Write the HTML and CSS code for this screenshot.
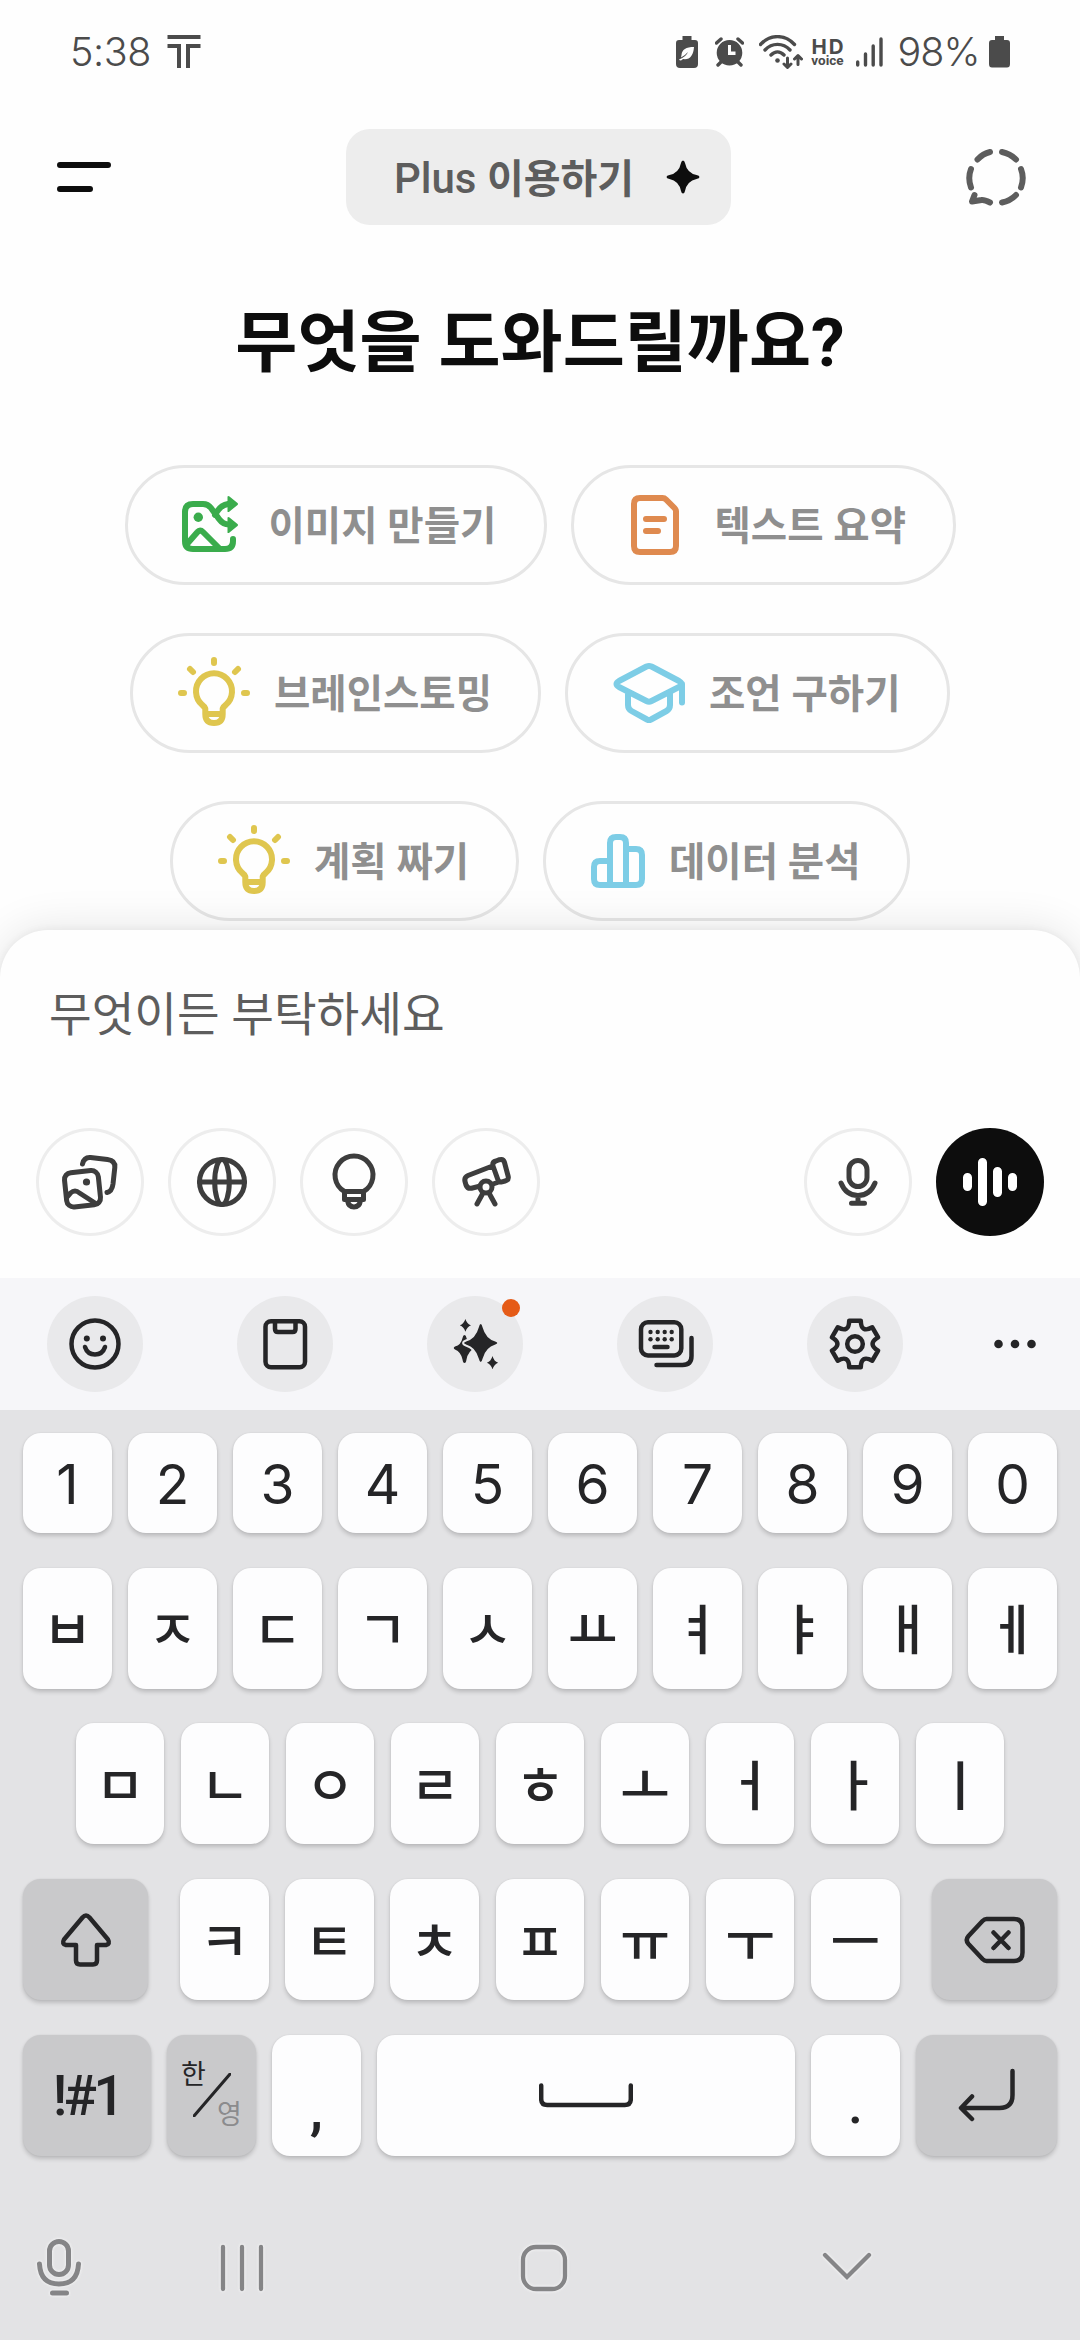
FILE: index.html
```html
<!DOCTYPE html>
<html lang="ko">
<head>
<meta charset="utf-8">
<title>채팅</title>
<link rel="stylesheet" href="styles.css">
</head>
<body>
<div class="screen">
  <div class="status">
    <span class="clock">5:38</span>
    <svg class="carrier" width="34" height="34" viewBox="0 0 34 34"><path d="M.5 0h33v4H.5zM.5 9H14v24h-4V13H.5zM19 9h14.500v4H23v20h-4z"/></svg>
    <svg class="power-save" width="22" height="32" viewBox="0 0 22 32"><path fill-rule="evenodd" d="M6.500 0h9v4H19q3 0 3 3v21q0 4-4 4H4q-4 0-4-4V7q0-3 3-3h3.500zM18 11C10 11 6 13.500 5.500 19L5 21.500q4-2 7-5.500-2 5-9 7.500l1 1q1.500 0 3-1.500 10 1.500 11-12z"/></svg>
    <svg class="alarm" width="29" height="30" viewBox="0 0 29 30"><path fill-rule="evenodd" d="M14.500 3a12.800 12.800 0 1 1 0 25.600A12.800 12.800 0 0 1 14.500 3zM13 8v10h7.500v-3.500H16V8z"/><path class="line" d="M1.500 6 6 2M27.500 6 23 2M6 25l-3 3M23 25l3 3"/></svg>
    <svg class="wifi" width="44" height="34" viewBox="0 0 44 34"><path class="line" d="M1.500 9.500C11-1 26-1 35.500 9.500M6 15c7-7.500 18-7.500 25 0M12 20c4-4 9-4 13 0"/><circle cx="18.500" cy="25.500" r="2.300"/><path class="line arrows" d="M28.500 23v9M25 29l3.500 3.500L32 29M39 29.500v-9M35.500 24l3.500-3.500 3.500 3.500"/></svg>
    <span class="hd"><b>HD</b><i>voice</i></span>
    <svg class="signal" width="27" height="30" viewBox="0 0 27 30"><path class="line" d="M1.700 25v3M9.500 17v11M17.200 9v19M25 2v26"/></svg>
    <span class="percent">98%</span>
    <svg class="battery" width="21" height="32" viewBox="0 0 21 32"><path d="M6 0h9v4h3q3 0 3 3v21q0 3.500-3 3.500H3Q0 31.500 0 28V7q0-3 3-3h3z"/></svg>
  </div>

  <header class="header">
    <svg class="menu" width="54" height="30" viewBox="0 0 54 30"><path d="M3 3h48M3 27h30"/></svg>
    <button class="plus"><span>Plus <b>이용하기</b></span><svg width="34" height="34" viewBox="0 0 34 34"><path d="M17 .5q1.500 0 2 2.500 2 10 11.500 12 3 .700 3 2t-3 2Q21 21 19 31q-.600 2.500-2 2.500T15 31Q13 21 3.500 19q-3-.700-3-2t3-2Q13 13 15 3 15.500.5 17 .5z"/></svg></button>
    <svg class="temp-chat" width="62" height="60" viewBox="0 0 62 60"><path d="M11.500 12.500Q17 6.500 24 5M36 5q8 1.500 14 7.500M55 22q3.500 9 0 18.500M50 48q-6 6-14 7.500M24 55.500Q18 52.500 15.500 53L6 54.500 8.500 48M5 40.500q-3.500-9.500 0-18.500"/></svg>
  </header>

  <main class="intro">
    <h1>무엇을 도와드릴까요?</h1>
    <div class="chips">
      <div class="row">
        <button class="chip w1 green"><svg width="72" height="72" viewBox="0 0 72 72"><path d="M60 50v2q0 8-8 8H20q-8 0-8-8V23q0-8 8-8h10q5 0 8 4l8 11q4 5.500 10 5.500M42 26q5-10 13-11M14 55l10.500-12q2.500-3 5.500 0L46 59"/><circle class="solid" cx="25.300" cy="28.300" r="4.700"/><path class="solid" d="M54.500 7.500q1-1 2 0l8 6.500q1 1 0 2l-8 6.500q-1 1-2 .200zM54.500 28.500q1-1 2 0l8 6.500q1 1 0 2l-8 6.500q-1 1-2 .200z"/></svg><span>이미지 만들기</span></button>
        <button class="chip w2 orange"><svg width="72" height="72" viewBox="0 0 72 72"><path d="M21 9h22.500q2 0 3.500 1.500L55.500 19q1.500 1.500 1.500 3.500V57q0 6-6 6H21q-6 0-6-6V15q0-6 6-6zM27 30h18M27 42h12"/></svg><span>텍스트 요약</span></button>
      </div>
      <div class="row">
        <button class="chip w3 yellow"><svg width="72" height="72" viewBox="0 0 72 72"><path d="M27.300 57v-5.500q-1-2-3-3.500a18 18 0 1 1 23.400 0q-2 1.500-3 3.500V57zM27.300 57q0 9 8.700 9t8.700-9M36 3v3M3 36h3M66 36h3M12 12l3 3M60 12l-3 3"/></svg><span>브레인스토밍</span></button>
        <button class="chip w2 blue"><svg width="72" height="72" viewBox="0 0 72 72"><path d="M33.500 9.500q2.500-1 5 0L66 24q5 3 0 6L38.500 44q-2.500 1.300-5 0L6 30q-5-3 0-6zM69 27v18.500M15 36v12q0 4 3.500 6L34 62.500q2 1 4 0L53.500 54q3.500-2 3.500-6V36"/></svg><span>조언 구하기</span></button>
      </div>
      <div class="row">
        <button class="chip w4 yellow"><svg width="72" height="72" viewBox="0 0 72 72"><path d="M27.300 57v-5.500q-1-2-3-3.500a18 18 0 1 1 23.400 0q-2 1.500-3 3.500V57zM27.300 57q0 9 8.700 9t8.700-9M36 3v3M3 36h3M66 36h3M12 12l3 3M60 12l-3 3"/></svg><span>계획 짜기</span></button>
        <button class="chip w5 blue"><svg width="54" height="72" viewBox="0 0 54 72"><path d="M19 60V18q0-6 6-6h4q6 0 6 6v42M19 36H9q-6 0-6 6v12q0 6 6 6h36q6 0 6-6V30q0-6-6-6H35"/></svg><span>데이터 분석</span></button>
      </div>
    </div>
  </main>

  <section class="composer">
    <div class="prompt">무엇이든 부탁하세요</div>
    <div class="actions">
      <button class="round"><svg width="108" height="108" viewBox="0 0 108 108"><rect x="29.500" y="43.500" width="34" height="34.500" rx="7" transform="rotate(-6 46.500 60.700)"/><path d="M31 69l3.500-4q4.500-4 9 0L59 75M46.500 36q1.500-7 8-6.500l17 2q8 1 7.300 8L77 56q-1 7.500-6 8.500"/><circle class="solid" cx="50.500" cy="54" r="3.600"/></svg></button>
      <button class="round"><svg width="108" height="108" viewBox="0 0 108 108"><circle cx="54" cy="54" r="22.500"/><ellipse cx="54" cy="54" rx="7.300" ry="22.500"/><path d="M31.500 54h45"/></svg></button>
      <button class="round"><svg width="108" height="108" viewBox="0 0 108 108"><path d="M44.500 63.500a19 19 0 1 1 19 0zM44.500 63.500v8h19v-8M47.500 72.500q1 6.500 6.500 6.500t6.500-6.500"/></svg></button>
      <button class="round"><svg width="108" height="108" viewBox="0 0 108 108"><path d="M60.500 38 36 47.500q-4 1.700-3 6l1 3.500q1.500 4 5.500 3.200l7-1.700M61 56l4.500-1.500M64 33l3.500-1.300q4-1 5 2.800l3.600 13.500q1 4-3 5l-3 .800q-3.500.700-4.500-3L61 38q-1-4 3-5zM51 65l-6 11M57 65l6 11"/><circle cx="54" cy="59" r="6"/></svg></button>
      <button class="round mic"><svg width="108" height="108" viewBox="0 0 108 108"><rect x="45" y="32.500" width="18" height="26" rx="9"/><path d="M37 55q5 12.500 17 12.500T71 55M54 68v6M47.500 75.300h13"/></svg></button>
      <button class="round voice"><svg width="108" height="108" viewBox="0 0 108 108"><path d="M31.500 49.500v9M46.500 34.500v39M61.500 43.500v21M76.500 49.500v9"/></svg></button>
    </div>
  </section>

  <section class="keyboard">
    <div class="tools">
      <button class="tool"><svg width="96" height="96" viewBox="0 0 96 96"><circle cx="48" cy="48" r="23.500"/><path d="M38 51q2.500 7.500 10 7.500T58 51"/><circle class="solid" cx="39.800" cy="42.600" r="3"/><circle class="solid" cx="56" cy="42.600" r="3"/></svg></button>
      <button class="tool"><svg width="96" height="96" viewBox="0 0 96 96"><rect x="28.500" y="25.300" width="39.500" height="46" rx="5.500"/><path d="M38 26v7q0 3 3 3h14.500q3 0 3-3v-7"/></svg></button>
      <button class="tool"><svg width="96" height="96" viewBox="0 0 96 96"><path class="solid" d="M37.500 39q1.500 0 2 3 1.500 7 8.500 10-7 3-8.500 11.500-.500 3.500-2 3.500t-2-3.500Q34 56 28 53.500q-2.500-1.500 0-3Q34 49 35.500 42q.500-3 2-3zM38.400 23q1.500 5 5.600 6.300-4 1.500-5.600 6.500-1.500-5-5.600-6.500 4-1.300 5.600-6.300zM65.500 60q1.500 5.500 5.600 6.700-4 1.500-5.600 6.500-1.500-5-5.600-6.500 4-1.200 5.600-6.700z"/><path class="star" d="M53.700 27q1.800 0 2.800 4 3 11 12 13.500 2.800 1 2.800 2.500t-2.800 2.500q-9 2.500-12 13.500-1 4-2.800 4t-2.800-4q-3-11-12-13.500-2.800-1-2.800-2.500t2.800-2.500q9-2.500 12-13.500 1-4 2.800-4z"/></svg><i class="dot"></i></button>
      <button class="tool"><svg width="96" height="96" viewBox="0 0 96 96"><rect x="24" y="26.200" width="40.300" height="33.300" rx="7"/><path d="M74.500 42v18q0 9-9 9H39.500M37.500 51h13"/><g class="solid"><circle cx="33.500" cy="36" r="2.200"/><circle cx="40.700" cy="36" r="2.200"/><circle cx="47.700" cy="36" r="2.200"/><circle cx="54.700" cy="36" r="2.200"/><circle cx="33.500" cy="43.300" r="2.200"/><circle cx="40.700" cy="43.300" r="2.200"/><circle cx="47.700" cy="43.300" r="2.200"/><circle cx="54.700" cy="43.300" r="2.200"/></g></svg></button>
      <button class="tool"><svg width="96" height="96" viewBox="-48 -48 96 96"><path d="M-5.800-23.300H5.800Q6-10.400 17.300-16.700L23.100-6.600Q12 0 23.100 6.600L17.300 16.700Q6 10.400 5.800 23.300H-5.800Q-6 10.400-17.300 16.700L-23.100 6.600Q-12 0-23.100-6.600L-17.300-16.700Q-6-10.400-5.800-23.300z"/><circle r="7.800"/></svg></button>
      <svg class="more" width="44" height="10" viewBox="0 0 44 10"><circle cx="5.500" cy="5" r="4.300"/><circle cx="22" cy="5" r="4.300"/><circle cx="38.500" cy="5" r="4.300"/></svg>
    </div>

    <div class="keys">
      <div class="krow digits"><b>1</b><b>2</b><b>3</b><b>4</b><b>5</b><b>6</b><b>7</b><b>8</b><b>9</b><b>0</b></div>
      <div class="krow jamo"><b>ㅂ</b><b>ㅈ</b><b>ㄷ</b><b>ㄱ</b><b>ㅅ</b><b>ㅛ</b><b>ㅕ</b><b>ㅑ</b><b>ㅐ</b><b>ㅔ</b></div>
      <div class="krow jamo nine"><b>ㅁ</b><b>ㄴ</b><b>ㅇ</b><b>ㄹ</b><b>ㅎ</b><b>ㅗ</b><b>ㅓ</b><b>ㅏ</b><b>ㅣ</b></div>
      <div class="krow shift-row">
        <b class="fn"><svg width="52" height="54" viewBox="0 0 52 54"><path d="M22.500 4.500q3.500-4 7 0L48 26.500q2.500 4.500-2 5.500h-9v15.500q0 4-4 4H20q-4 0-4-4V32H6q-4.500-1-2-5.500z"/></svg></b>
        <div class="letters jamo"><b>ㅋ</b><b>ㅌ</b><b>ㅊ</b><b>ㅍ</b><b>ㅠ</b><b>ㅜ</b><b>ㅡ</b></div>
        <b class="fn"><svg width="62" height="48" viewBox="0 0 62 48"><path d="M22.500 3H50q8.500 0 8.500 8.500v25q0 8.500-8.500 8.500H22.500q-2 0-4-2L4.500 28q-3.500-4 0-8L18.500 5q2-2 4-2zM29.500 16.500l15 15.500M44.500 16.500l-15 15.500"/></svg></b>
      </div>
      <div class="krow bottom-row">
        <b class="fn sym">!#1</b>
        <b class="fn lang"><span class="ko">한</span><svg width="38" height="44" viewBox="0 0 38 44"><path d="M1 43 37 1"/></svg><span class="en">영</span></b>
        <b class="punct comma">,</b>
        <b><svg class="space" width="94" height="25" viewBox="0 0 94 25"><path d="M2.200 2.500V16q0 6 6 6h77.600q6 0 6-6V2.500"/></svg></b>
        <b class="punct">.</b>
        <b class="fn"><svg width="58" height="54" viewBox="0 0 58 54"><path d="M54.500 3v24q0 13-13 13H4M14 28.500 3 40l11 11"/></svg></b>
      </div>
    </div>

    <nav class="nav">
      <svg width="48" height="62" viewBox="0 0 48 62"><rect x="14.500" y="4.500" width="19" height="33" rx="9.500"/><path d="M4.500 27q1 20 19.500 20t19.500-20M17.500 56h14"/></svg>
      <svg width="48" height="62" viewBox="0 0 48 62"><path class="thin" d="M5 10v42M24 10v42M43 10v42"/></svg>
      <svg width="48" height="62" viewBox="0 0 48 62"><rect class="thin" x="3" y="10" width="42" height="42" rx="13"/></svg>
      <svg width="50" height="62" viewBox="0 0 50 62"><path class="thin" d="M3 18l22 22 22-22"/></svg>
    </nav>
  </section>
</div>
</body>
</html>
```
FILE: styles.css
```css
* { box-sizing: border-box; }
body {
  margin: 0;
  background: #fefefe;
  font-family: Roboto, "Noto Sans CJK KR", sans-serif;
  color: #0d0d0d;
}
button { border: 0; padding: 0; background: none; font: inherit; color: inherit; }
svg { display: block; flex: none; }
.screen { width: 1080px; height: 2340px; display: flex; flex-direction: column; overflow: hidden; }

/* status bar */
.status {
  height: 104px; flex: none;
  display: flex; align-items: center;
  padding: 0 70px; color: #4b4b4b;
}
.status svg { fill: #4b4b4b; }
.status .line { fill: none; stroke: #4b4b4b; stroke-width: 3.4; stroke-linecap: round; stroke-linejoin: round; }
.status .arrows { stroke-width: 3; }
.clock, .percent { font-family: Inter, sans-serif; font-size: 39.500px; font-weight: 300; line-height: 40px; letter-spacing: -0.4px; white-space: nowrap; }
.clock { width: 97px; }
.power-save { margin-left: 475px; }
.alarm { margin-left: 17px; }
.wifi { margin-left: 15px; }
.hd { margin-left: 8px; width: 34px; display: flex; flex-direction: column; align-items: center; }
.hd b { font-family: Inter, sans-serif; font-size: 20.500px; line-height: 17px; font-weight: 700; letter-spacing: 2px; margin-right: -2px; }
.hd i { font-size: 13.500px; line-height: 11px; font-style: normal; font-weight: 700; }
.signal { margin-left: 12px; }
.percent { margin-left: 14px; width: 92px; letter-spacing: -0.900px; }

/* header */
.header {
  height: 146px; flex: none;
  display: flex; align-items: center; justify-content: space-between;
  padding: 0 52px 0 57px;
}
.plus {
  width: 385px; height: 96px; border-radius: 24px; background: #ededed;
  display: flex; align-items: center; justify-content: space-between;
  padding: 0 31px 0 48px;
  font-size: 42px; font-weight: 500; color: #5d5d5d; white-space: nowrap;
}
.plus span { padding-bottom: 3px; }
.plus b { font-size: 40px; font-weight: 700; }
.menu { fill: none; stroke: #0d0d0d; stroke-width: 6; stroke-linecap: round; }
.plus svg { fill: #0d0d0d; }
.temp-chat { fill: none; stroke: #5d5d5d; stroke-width: 6; stroke-linecap: round; stroke-linejoin: round; }

/* introduction */
.intro { height: 680px; flex: none; display: flex; flex-direction: column; align-items: center; }
h1 { margin: 48px 0 0; height: 90px; line-height: 90px; font-size: 67.500px; font-weight: 700; white-space: nowrap; }
.chips { margin-top: 77px; display: flex; flex-direction: column; gap: 48px; }
.row { display: flex; justify-content: center; gap: 24px; }
.chip {
  height: 120px; border: 3px solid #e6e6e6; border-radius: 60px;
  display: flex; align-items: center; gap: 24px; padding-left: 45px;
  font-size: 39.500px; font-weight: 700; color: #8f8f8f; white-space: nowrap;
}
.chip span { padding-bottom: 5px; }
.chip svg { fill: none; stroke: currentColor; stroke-width: 6; stroke-linecap: round; stroke-linejoin: round; }
.chip .solid { fill: currentColor; stroke: none; }
.w1 { width: 422px; }
.w2 { width: 385px; }
.w3 { width: 411px; }
.w4 { width: 349px; }
.w5 { width: 367px; }
.green svg { color: #3aac4c; }
.orange svg { color: #df8a4f; }
.yellow svg { color: #dfc64f; }
.blue svg { color: #7dcde6; }

/* composer */
.composer {
  position: relative; height: 348px; flex: none; background: #fefefe;
  border-radius: 48px 48px 0 0;
  box-shadow: 0 0 45px rgba(0, 0, 0, 0.11), 0 0 9px rgba(0, 0, 0, 0.06);
  padding: 50px 36px 0;
}
.prompt { height: 70px; line-height: 70px; padding-left: 13px; font-size: 46.400px; color: #5d5d5d; }
.actions { margin-top: 78px; display: flex; gap: 24px; }
.round { width: 108px; height: 108px; border-radius: 50%; box-shadow: inset 0 0 0 3px #ededed; color: #3d3d3d; }
.round svg { fill: none; stroke: #3d3d3d; stroke-width: 5; stroke-linecap: round; stroke-linejoin: round; }
.mic { margin-left: auto; }
.round .solid { fill: #3d3d3d; stroke: none; }
.voice { background: #0d0d0d; box-shadow: none; }
.voice svg { stroke: #fff; stroke-width: 9; }

/* keyboard */
.keyboard { position: relative; flex: 1; background: #e3e3e5; color: #252527; display: flex; flex-direction: column; }
.tools {
  height: 132px; flex: none; background: #f6f6f9;
  display: flex; align-items: center; gap: 94px; padding-left: 47px;
}
.tool { position: relative; width: 96px; height: 96px; border-radius: 50%; background: #e9e9eb; color: #252527; }
.tool svg { fill: none; stroke: #252527; stroke-width: 4.500; stroke-linecap: round; stroke-linejoin: round; }
.tool .solid { fill: #252527; stroke: none; }
.tool .star { fill: #252527; stroke: #e9e9eb; stroke-width: 2; }
.dot { position: absolute; left: 75px; top: 3px; width: 18px; height: 18px; border-radius: 50%; background: #e55b17; }
.more { margin-left: -4px; fill: #252527; }

.keys { padding: 23px 23px 0; display: grid; grid-template-rows: 100px 121px 121px 121px 121px; row-gap: 34.700px; }
.krow, .letters { display: grid; grid-template-columns: repeat(10, 89px); column-gap: 16px; }
.krow b {
  border-radius: 18px; background: #fdfdfe;
  box-shadow: 0 3px 4px rgba(0, 0, 0, 0.17), 0 0 2px rgba(0, 0, 0, 0.08);
  display: flex; align-items: center; justify-content: center;
  font-size: 54px; font-weight: 400; line-height: 1;
}
.krow b svg { fill: none; stroke: #252527; stroke-width: 4.500; stroke-linecap: round; stroke-linejoin: round; }
.digits b { font-family: Inter, sans-serif; font-size: 55px; padding-top: 3px; }
.jamo b { font-weight: 500; padding-top: 8px; }
.nine { grid-template-columns: repeat(9, 88px); column-gap: 17px; padding-left: 53px; }
.letters { grid-template-columns: repeat(7, 88.500px); column-gap: 16.700px; }
.shift-row { grid-template-columns: 125px 720px 125px; column-gap: 32px; }
.bottom-row { grid-template-columns: 128px 89px 89px 418px 89px 141px; column-gap: 16px; }
.krow .fn { background: #c9c9cb; }
.krow .sym { font-size: 55px; letter-spacing: -3.500px; font-weight: 500; padding-top: 2px; }
.krow .lang { position: relative; }
.krow .lang svg { stroke-width: 3; }
.lang span { position: absolute; font-size: 27px; line-height: 30px; }
.ko { left: 14px; top: 25px; }
.en { left: 50px; top: 65px; color: #8b8b8d; }
.krow .punct { align-items: flex-end; padding-bottom: 24px; font-weight: 500; }
.krow .comma { padding-bottom: 19px; font-weight: 700; }

.nav { display: flex; align-items: center; height: 144px; padding-left: 35px; margin-top: auto; }
.nav svg { fill: none; stroke: #858587; stroke-width: 5; stroke-linecap: round; stroke-linejoin: miter; filter: drop-shadow(0 0 1.500px #f2f2f3) drop-shadow(0 0 1px #eeeeef); }
.nav .thin { stroke-width: 4.300; }
.nav svg:nth-child(2) { margin-left: 135px; }
.nav svg:nth-child(3), .nav svg:nth-child(4) { margin-left: 254px; }
```
